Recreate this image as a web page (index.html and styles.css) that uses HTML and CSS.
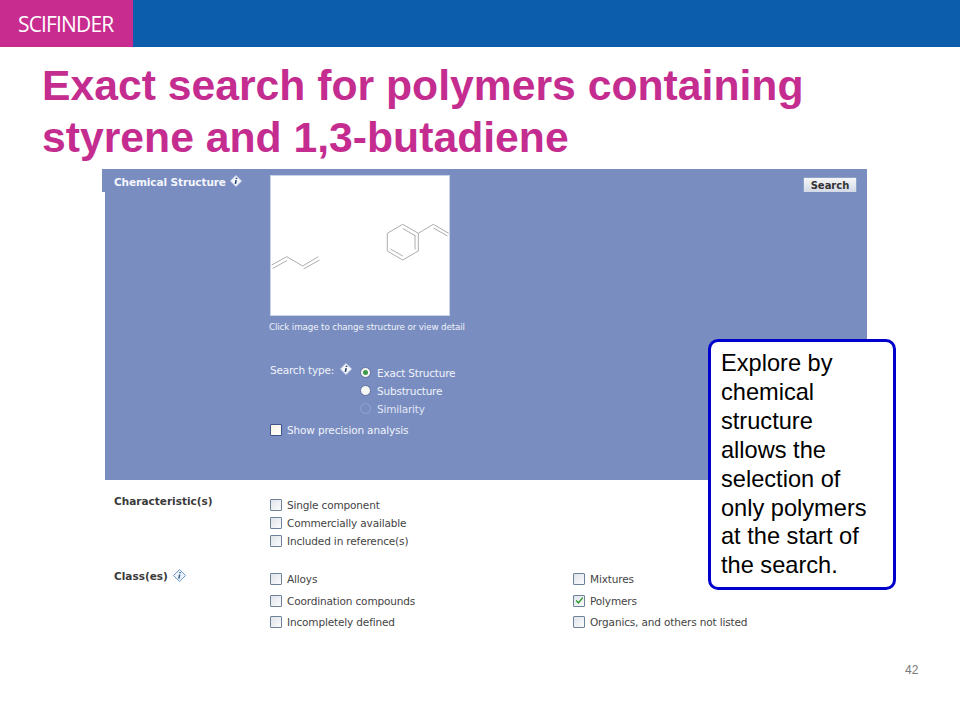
FILE: index.html
```html
<!DOCTYPE html>
<html lang="en">
<head>
<meta charset="utf-8">
<title>Exact search for polymers</title>
<link rel="stylesheet" href="styles.css">
</head>
<body>
<div class="slide">
  <header class="topbar">
    <div class="brand">SCIFINDER</div>
  </header>
  <h1 class="title">Exact search for polymers containing<br>styrene and 1,3-butadiene</h1>
  <section class="shot">
    <div class="panel">
      <div class="panel-tab">
        <span class="heading light">Chemical Structure</span>
        <svg class="info" viewBox="0 0 14 14"><path d="M7 0.5 13.5 7 7 13.5 0.5 7Z" fill="#f4f6fb" stroke="#c8d2e8"/><path d="M7.6 3.2v1.4M7.2 6 6.3 10.4" stroke="#1f3f6f" stroke-width="1.8" fill="none"/></svg>
      </div>
      <button class="search-btn">Search</button>
      <div class="panel-body">
        <div class="panel-inner">
          <div class="structure">
            <svg viewBox="0 0 180 141" width="180" height="141">
              <g fill="none" stroke="#a3a3a3" stroke-width="0.9">
                <path d="M1.7 90 16.7 81.7 32.7 91 48.3 81.7"/>
                <path d="M2.7 93.5 17 85.5M33.5 94 49.5 85"/>
                <path d="M132.7 49.3 148.3 58.3V76L132.7 85 117.3 76V58.3ZM132.7 53.5 145 60.5M145 60V74.5M132.7 81 120.5 74"/>
                <path d="M148.3 58.3 163.3 49.3 178.7 58.3M163.5 53 177.5 61"/>
              </g>
            </svg>
          </div>
          <p class="caption">Click image to change structure or view detail</p>
          <div class="search-type">
            <span class="st-label">Search type:</span>
            <svg class="info small" viewBox="0 0 14 14"><path d="M7 0.5 13.5 7 7 13.5 0.5 7Z" fill="#f4f6fb" stroke="#c8d2e8"/><path d="M7.6 3.2v1.4M7.2 6 6.3 10.4" stroke="#1f3f6f" stroke-width="1.8" fill="none"/></svg>
            <div class="radios">
              <div class="radio-row"><span class="radio on"></span><span>Exact Structure</span></div>
              <div class="radio-row"><span class="radio"></span><span>Substructure</span></div>
              <div class="radio-row"><span class="radio off"></span><span>Similarity</span></div>
            </div>
          </div>
          <div class="precision"><span class="check dark"></span><span>Show precision analysis</span></div>
        </div>
      </div>
    </div>
    <div class="filters">
      <div class="filter-row chars">
        <span class="heading">Characteristic(s)</span>
        <div class="opts tight">
          <div class="opt"><span class="check"></span>Single component</div>
          <div class="opt"><span class="check"></span>Commercially available</div>
          <div class="opt"><span class="check"></span>Included in reference(s)</div>
        </div>
      </div>
      <div class="filter-row classes">
        <span class="heading">Class(es)
          <svg class="info outline" viewBox="0 0 14 14"><path d="M7 0.5 13.5 7 7 13.5 0.5 7Z" fill="#eef3fa" stroke="#5f8fc0"/><path d="M7.6 3.2v1.4M7.2 6 6.3 10.4" stroke="#2b5c94" stroke-width="1.6" fill="none"/></svg>
        </span>
        <div class="opts col-left">
          <div class="opt"><span class="check"></span>Alloys</div>
          <div class="opt"><span class="check"></span>Coordination compounds</div>
          <div class="opt"><span class="check"></span>Incompletely defined</div>
        </div>
        <div class="opts">
          <div class="opt"><span class="check"></span>Mixtures</div>
          <div class="opt"><span class="check">
            <svg viewBox="0 0 11 11" width="9" height="9"><path d="M1.5 5.5 4.2 8.5 9.5 2" fill="none" stroke="#2f9a2f" stroke-width="1.8"/></svg>
          </span>Polymers</div>
          <div class="opt"><span class="check"></span>Organics, and others not listed</div>
        </div>
      </div>
    </div>
  </section>
  <aside class="callout">Explore by chemical structure allows the selection of only polymers at the start of the search.</aside>
  <div class="page-num">42</div>
</div>
</body>
</html>
```

FILE: styles.css
```css
* { box-sizing: border-box; }
html, body { margin: 0; padding: 0; background: #fff; }
.slide { position: relative; width: 960px; height: 720px; overflow: hidden; background: #fff; font-family: "Liberation Sans", Arial, sans-serif; }
.topbar { height: 47px; background: #0c5dab; }
.brand { width: 133px; height: 47px; background: #c92c8f; color: #fff; font-family: "Open Sans", sans-serif; font-size: 21px; letter-spacing: -0.85px; line-height: 49px; padding-left: 18px; }
.title { margin: 0; padding: 12px 0 0 42px; height: 122px; color: #c42d8f; font-size: 42.7px; line-height: 52px; font-weight: 700; white-space: nowrap; }
.shot { margin-left: 102px; width: 765px; font-family: "DejaVu Sans", sans-serif; font-size: 10.5px; }
.panel { position: relative; color: #f0f3fa; }
.panel-tab { height: 23px; background: #798dc1; padding: 7px 0 0 12px; display: flex; align-items: flex-start; gap: 4px; }
.heading { font-size: 10.5px; font-weight: 700; color: #333; white-space: nowrap; }
.heading.light { color: #f4f6fb; letter-spacing: -0.1px; }
.info { width: 12px; height: 12px; flex: none; margin-top: -1px; }
.search-btn { position: absolute; top: 8px; right: 10px; width: 54px; height: 17px; padding: 0; border: 1px solid #8ea0c8; border-radius: 1px; background: linear-gradient(#f6f6f6, #cfd7e6); color: #333; font: 700 10px "DejaVu Sans", sans-serif; }
.panel-body { margin-left: 3px; height: 288px; background: #798dc1; position: relative; }
.panel-inner { position: absolute; top: -17px; left: 165px; width: 320px; }
.structure { width: 180px; height: 141px; background: #fff; outline: 1px solid #c9d2e6; outline-offset: -1px; }
.structure svg { display: block; }
.caption { margin: 5px 0 0 -1px; font-size: 8.7px; line-height: 12px; white-space: nowrap; letter-spacing: -0.1px; }
.search-type { display: flex; align-items: flex-start; margin-top: 31px; font-size: 10.5px; }
.st-label { line-height: 13px; letter-spacing: -0.2px; }
.info.small { width: 12px; height: 12px; margin: -1px 0 0 6px; }
.radios { margin-left: 8px; display: flex; flex-direction: column; gap: 5px; margin-top: 2px; }
.radio-row { display: flex; align-items: center; gap: 6px; height: 13px; letter-spacing: -0.2px; }
.radio { width: 11px; height: 11px; border-radius: 50%; background: #f6f6f4; border: 1px solid #5d6f9e; display: inline-block; position: relative; }
.radio.on::after { content: ""; position: absolute; left: 2px; top: 2px; width: 5px; height: 5px; border-radius: 50%; background: #3d9a4a; }
.radio.off { background: transparent; border-color: #97a6cf; }
.radio-row:last-child { color: #e1e6f3; }
.precision { display: flex; align-items: center; gap: 5px; margin: 8px 0 0 0; height: 13px; letter-spacing: -0.15px; }
.check { width: 12px; height: 12px; flex: none; display: inline-flex; align-items: center; justify-content: center; border: 1px solid #6d8199; border-radius: 1px; background: linear-gradient(135deg, #dfe4ea, #fbfbfb); }
.check.dark { border-color: #3f5488; background: linear-gradient(135deg, #f8f2e6, #fff); }
.filters { padding-left: 12px; color: #444; }
.filter-row { display: flex; align-items: flex-start; }
.filter-row .heading { width: 156px; flex: none; display: flex; gap: 5px; color: #3a3a3a; }
.filter-row .info { width: 13px; height: 13px; }
.chars { padding-top: 15px; }
.classes { padding-top: 26px; }
.classes .heading { margin-top: -3px; }
.classes .opts { gap: 9.5px; }
.col-left { width: 303px; }
.opts { display: flex; flex-direction: column; gap: 6px; }
.chars .opts { margin-top: 4px; }
.opt { display: flex; align-items: center; gap: 5px; height: 12px; white-space: nowrap; letter-spacing: -0.15px; }
.callout { position: absolute; left: 708px; top: 339px; width: 188px; height: 251px; padding: 7px 10px; background: #fff; border: 3px solid #0000cc; border-radius: 10px; color: #000; font-size: 23.6px; line-height: 28.9px; }
.page-num { position: absolute; left: 905px; top: 663px; font-size: 12px; color: #7a7a7a; }
```
